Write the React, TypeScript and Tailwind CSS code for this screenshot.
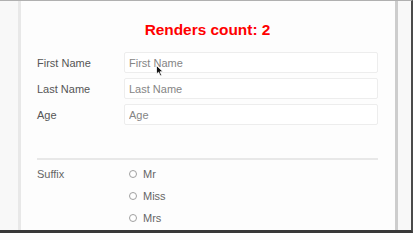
import React from "react";

const font = { fontFamily: '"Liberation Sans", Arial, sans-serif' };

function Row({ label }: { label: string }) {
  return (
    <div className="flex items-center h-[21px]">
      <div className="w-[87px] text-[11px] text-[#555] pt-[1px]">{label}</div>
      <input
        className="flex-1 h-[21px] border border-[#ededed] rounded-[2px] px-[4px] text-[11px] text-[#555] placeholder:text-[#858585] bg-white outline-none"
        placeholder={label}
        style={font}
      />
    </div>
  );
}

function Radio({ label }: { label: string }) {
  return (
    <div className="flex items-center h-[22px]">
      <span className="w-[8px] h-[8px] rounded-full border border-[#a0a0a0] bg-white ml-[5px]" />
      <span className="ml-[6px] text-[11px] text-[#666]">{label}</span>
    </div>
  );
}

export default function App() {
  return (
    <div
      className="relative w-[413px] h-[233px] overflow-hidden bg-[#f8f8f8] border-t border-[#b0b0b0] border-r-2 border-r-[#4a4a4a] border-b-[3px] border-b-[#3a3a3a]"
      style={font}
    >
      <div className="ml-[18px] w-[380px] h-full bg-[#fdfdfd] border-l-[3px] border-l-[#e8e8e8] border-r-[3px] border-r-[#cdcdcd] pl-[16px] pr-[17px]">
        <div className="pt-[19px] h-[40px] text-center text-[15.4px] leading-[20px] font-bold text-[#f00]">
          Renders count: 2
        </div>
        <div className="mt-[11px] flex flex-col gap-[5px]">
          <Row label="First Name" />
          <Row label="Last Name" />
          <Row label="Age" />
        </div>
        <div className="mt-[33px] h-[2px] bg-[#e8e8e8]" />
        <div className="mt-[3px] flex">
          <div className="w-[87px] h-[22px] flex items-center text-[11px] text-[#666]">Suffix</div>
          <div className="flex flex-col">
            <Radio label="Mr" />
            <Radio label="Miss" />
            <Radio label="Mrs" />
          </div>
        </div>
      </div>
      <svg
        className="absolute left-[156px] top-[64px]"
        width="8"
        height="12"
        viewBox="0 0 8 12"
      >
        <path d="M0.5 0.5 L0.5 9 L2.6 7.2 L4.2 10.8 L5.6 10.2 L4.1 6.7 L7 6.7 Z" fill="#111" stroke="#fff" strokeWidth="0.8" />
      </svg>
    </div>
  );
}
